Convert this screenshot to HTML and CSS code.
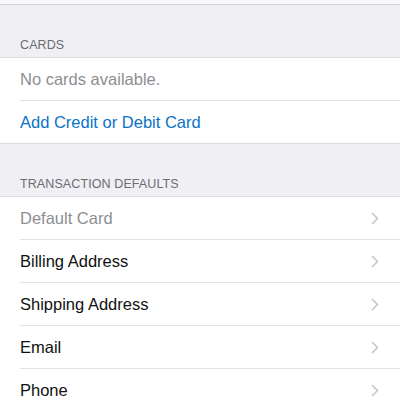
FILE: index.html
```html
<!DOCTYPE html>
<html lang="en">
<head>
<meta charset="utf-8">
<title>Wallet &amp; Apple Pay</title>
<link rel="stylesheet" href="styles.css">
</head>
<body>
<div class="screen">
  <div class="top-strip"></div>

  <div class="section-header">CARDS</div>
  <ul class="group">
    <li class="cell"><span class="label muted">No cards available.</span></li>
    <li class="cell"><span class="label link">Add Credit or Debit Card</span></li>
  </ul>

  <div class="section-header">TRANSACTION DEFAULTS</div>
  <ul class="group">
    <li class="cell">
      <span class="label muted">Default Card</span>
      <svg class="chevron" viewBox="0 0 8 13" aria-hidden="true"><path d="M1 1l5.5 5.5L1 12"/></svg>
    </li>
    <li class="cell">
      <span class="label">Billing Address</span>
      <svg class="chevron" viewBox="0 0 8 13" aria-hidden="true"><path d="M1 1l5.5 5.5L1 12"/></svg>
    </li>
    <li class="cell">
      <span class="label">Shipping Address</span>
      <svg class="chevron" viewBox="0 0 8 13" aria-hidden="true"><path d="M1 1l5.5 5.5L1 12"/></svg>
    </li>
    <li class="cell">
      <span class="label">Email</span>
      <svg class="chevron" viewBox="0 0 8 13" aria-hidden="true"><path d="M1 1l5.5 5.5L1 12"/></svg>
    </li>
    <li class="cell">
      <span class="label">Phone</span>
      <svg class="chevron" viewBox="0 0 8 13" aria-hidden="true"><path d="M1 1l5.5 5.5L1 12"/></svg>
    </li>
  </ul>
</div>
</body>
</html>
```
FILE: styles.css
```css
html, body {
  margin: 0;
  padding: 0;
  background: #efeff4;
}

.screen {
  width: 400px;
  height: 400px;
  overflow: hidden;
  font-family: "Liberation Sans", Arial, sans-serif;
  background: #efeff4;
}

.top-strip {
  height: 4px;
  background: #f8f8f8;
  border-bottom: 1px solid #d6d6da;
}

.section-header {
  height: 52px;
  box-sizing: border-box;
  padding: 0 20px 5px;
  display: flex;
  align-items: flex-end;
  font-size: 12.5px;
  color: #6d6d72;
  letter-spacing: 0.1px;
}

.group {
  list-style: none;
  margin: 0;
  padding: 0 0 0 20px;
  background: #fff;
  border-top: 1px solid #dcdce0;
  border-bottom: 1px solid #dcdce0;
}

.cell {
  height: 42px;
  display: flex;
  align-items: center;
  padding-right: 21px;
  border-bottom: 1px solid #e2e2e5;
}

.cell:last-child {
  border-bottom: none;
}

.label {
  flex: 1;
  padding-top: 1px;
  font-size: 16.5px;
  color: #111;
}

.label.muted {
  color: #8e8e93;
}

.label.link {
  color: #0b73c6;
}

.chevron {
  width: 8px;
  height: 13px;
  fill: none;
  stroke: #c4c4c9;
  stroke-width: 1.5;
}
```
